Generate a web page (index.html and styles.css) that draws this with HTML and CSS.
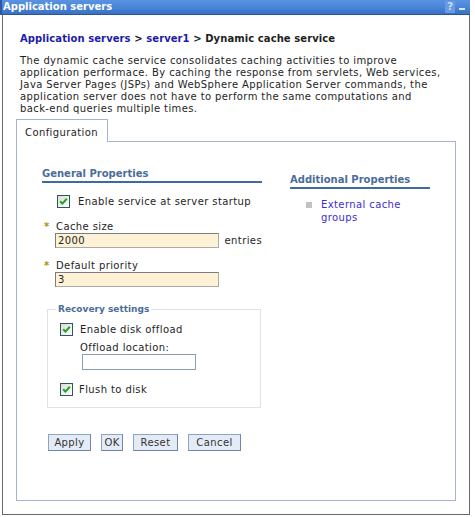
FILE: index.html
```html
<!DOCTYPE html>
<html>
<head>
<meta charset="utf-8">
<link rel="stylesheet" href="styles.css">
</head>
<body>
<div class="portlet">
  <div class="titlebar">
    <span class="title">Application servers</span>
    <span class="tools"><span class="help">?</span><span class="min"></span></span>
  </div>
  <div class="frame">
    <div class="crumb"><a class="crumb-link">Application servers</a> &gt; <a class="crumb-link">server1</a> &gt; Dynamic cache service</div>
    <p class="desc">The dynamic cache service consolidates caching activities to improve<br>application performace. By caching the response from servlets, Web services,<br>Java Server Pages (JSPs) and WebSphere Application Server commands, the<br>application server does not have to perform the same computations and<br>back-end queries multiple times.</p>
    <div class="tabs"><div class="tab">Configuration</div></div>
    <div class="panel">
      <div class="cols">
        <div class="general">
          <div class="section-head">General Properties</div>
          <label class="check-row startup">
            <svg class="cb" width="13" height="13" viewBox="0 0 13 13"><defs><linearGradient id="g1" x1="0" y1="0" x2="1" y2="1"><stop offset="0" stop-color="#dcdcd4"/><stop offset="1" stop-color="#ffffff"/></linearGradient></defs><rect x="0.5" y="0.5" width="12" height="12" fill="url(#g1)" stroke="#2f5560"/><path d="M3.2 6.2 L5.4 8.6 L9.8 3.8" fill="none" stroke="#21a121" stroke-width="2"/></svg>
            <span>Enable service at server startup</span>
          </label>
          <div class="field">
            <div class="field-label"><span class="req">*</span>Cache size</div>
            <div class="field-input"><input class="text req-input" type="text" value="2000"><span class="unit">entries</span></div>
          </div>
          <div class="field">
            <div class="field-label"><span class="req">*</span>Default priority</div>
            <div class="field-input"><input class="text req-input" type="text" value="3"></div>
          </div>
          <fieldset class="recovery">
            <legend>Recovery settings</legend>
            <label class="check-row">
              <svg class="cb" width="13" height="13" viewBox="0 0 13 13"><defs><linearGradient id="g2" x1="0" y1="0" x2="1" y2="1"><stop offset="0" stop-color="#dcdcd4"/><stop offset="1" stop-color="#ffffff"/></linearGradient></defs><rect x="0.5" y="0.5" width="12" height="12" fill="url(#g2)" stroke="#2f5560"/><path d="M3.2 6.2 L5.4 8.6 L9.8 3.8" fill="none" stroke="#21a121" stroke-width="2"/></svg>
              <span>Enable disk offload</span>
            </label>
            <div class="offload">
              <div class="offload-label">Offload location:</div>
              <input class="text offload-input" type="text" value="">
            </div>
            <label class="check-row flush">
              <svg class="cb" width="13" height="13" viewBox="0 0 13 13"><defs><linearGradient id="g3" x1="0" y1="0" x2="1" y2="1"><stop offset="0" stop-color="#dcdcd4"/><stop offset="1" stop-color="#ffffff"/></linearGradient></defs><rect x="0.5" y="0.5" width="12" height="12" fill="url(#g3)" stroke="#2f5560"/><path d="M3.2 6.2 L5.4 8.6 L9.8 3.8" fill="none" stroke="#21a121" stroke-width="2"/></svg>
              <span>Flush to disk</span>
            </label>
          </fieldset>
        </div>
        <div class="additional">
          <div class="section-head">Additional Properties</div>
          <ul class="links">
            <li><span class="bullet"></span><a class="prop-link">External cache groups</a></li>
          </ul>
        </div>
      </div>
      <div class="buttons">
        <button class="btn btn-apply">Apply</button>
        <button class="btn btn-ok">OK</button>
        <button class="btn btn-reset">Reset</button>
        <button class="btn btn-cancel">Cancel</button>
      </div>
    </div>
  </div>
</div>
</body>
</html>
```

FILE: styles.css
```css
* { box-sizing: border-box; }
html, body { margin: 0; padding: 0; background: #ffffff; }
body {
  font-family: "DejaVu Sans", Verdana, sans-serif;
  font-size: 10px;
  letter-spacing: 0.4px;
  color: #1e1e1e;
}
.portlet { width: 470px; }
.titlebar {
  height: 15px;
  display: flex;
  align-items: center;
  justify-content: space-between;
  background: linear-gradient(to bottom, #5b93e0 0%, #4682d6 60%, #3a6fc0 100%);
  border-left: 2px solid #2c5aa0;
  border-bottom: 1px solid #2b5597;
  padding: 0 5px 0 1px;
}
.title { color: #ffffff; font-weight: bold; font-size: 10px; line-height: 14px; letter-spacing: 0; }
.tools { display: flex; align-items: center; gap: 4px; }
.help {
  color: #c6dbf6;
  font-weight: bold;
  font-size: 10px;
  line-height: 12px;
  background: #6a9be0;
  padding: 0 2px;
  letter-spacing: 0;
}
.min { width: 6px; height: 2px; background: #d8e6fa; margin-top: 3px; }
.frame {
  margin: 0 0 0 2px;
  height: 500px;
  border: 1px solid #6a6a6a;
  border-top: none;
  padding: 17px 0 0 17px;
}
.crumb { font-weight: bold; line-height: 13px; color: #1e1e1e; letter-spacing: 0.08px; }
.crumb-link { color: #1c1ca8; }
.desc { margin: 10px 0 0 0; line-height: 12px; }
.tabs { display: flex; margin: 4px 0 0 -4px; }
.tab {
  width: 92px;
  height: 23px;
  border: 1px solid #a7b3d3;
  border-bottom: none;
  background: #ffffff;
  padding: 7px 0 0 8px;
  margin-bottom: -1px;
  position: relative;
  z-index: 1;
  line-height: 12px;
}
.panel {
  margin-left: -4px;
  width: 440px;
  height: 360px;
  border: 1px solid #a7b3d3;
  padding: 25px 0 0 25px;
}
.cols { display: flex; }
.general { width: 220px; }
.additional { width: 140px; margin-left: 28px; padding-top: 6px; }
.section-head {
  font-weight: bold;
  color: #4b6d98;
  line-height: 13px;
  padding-bottom: 1px;
  border-bottom: 2px solid #3f6a9e;
  letter-spacing: 0;
}
.check-row { display: flex; align-items: center; gap: 7px; line-height: 13px; }
.cb { flex: none; display: block; }
.startup { margin: 12px 0 0 15px; gap: 8px; }
.field { margin-top: 13px; }
.field + .field { margin-top: 12px; }
.field-label { line-height: 12px; padding-left: 2px; display: flex; }
.req { color: #a89210; width: 12px; font-weight: bold; }
.field-input { display: flex; align-items: center; margin: 0 0 0 13px; }
.text {
  font-family: "DejaVu Sans", Verdana, sans-serif;
  font-size: 10px;
  letter-spacing: 0.4px;
  height: 15px;
  padding: 0 0 0 2px;
  margin: 0;
  border: 1px solid #a9a9a9;
  border-top-color: #7c7c7c;
  border-left-color: #7c7c7c;
  color: #1e1e1e;
  outline: none;
}
.req-input { width: 164px; background: #fdf2d6; }
.unit { margin-left: 6px; }
.recovery {
  margin: 16px 0 0 5px;
  width: 214px;
  border: 1px solid #e2e2e2;
  padding: 8px 0 11px 12px;
}
.recovery legend {
  font-weight: bold;
  font-size: 9px;
  color: #4b6d98;
  padding: 0 2px;
  margin-left: -4px;
  line-height: 12px;
  letter-spacing: 0;
}
.offload { margin: 6px 0 0 20px; }
.offload-label { line-height: 12px; }
.offload-input { width: 114px; height: 16px; margin: 0 0 0 2px; background: #ffffff; border: 1px solid #8c9db8; }
.flush { margin-top: 13px; gap: 6px; }
.links { list-style: none; margin: 9px 0 0 0; padding: 0 0 0 16px; }
.links li { display: flex; align-items: flex-start; gap: 9px; line-height: 13px; }
.bullet { flex: none; width: 6px; height: 6px; background: #c2c2c2; margin-top: 4px; }
.prop-link { color: #3a2ed2; width: 95px; }
.buttons { display: flex; gap: 10px; margin: 26px 0 0 6px; }
.btn {
  height: 17px;
  padding: 0;
  font-family: "DejaVu Sans", Verdana, sans-serif;
  font-size: 10px;
  letter-spacing: 0.4px;
  color: #333333;
  background: #e3ebf7;
  border: 1px solid #8fa3c4;
  border-right-color: #6f84a8;
  border-bottom-color: #6f84a8;
  text-align: center;
  line-height: 15px;
}
.btn-apply { width: 43px; }
.btn-ok { width: 22px; }
.btn-reset { width: 45px; }
.btn-cancel { width: 53px; }
```
